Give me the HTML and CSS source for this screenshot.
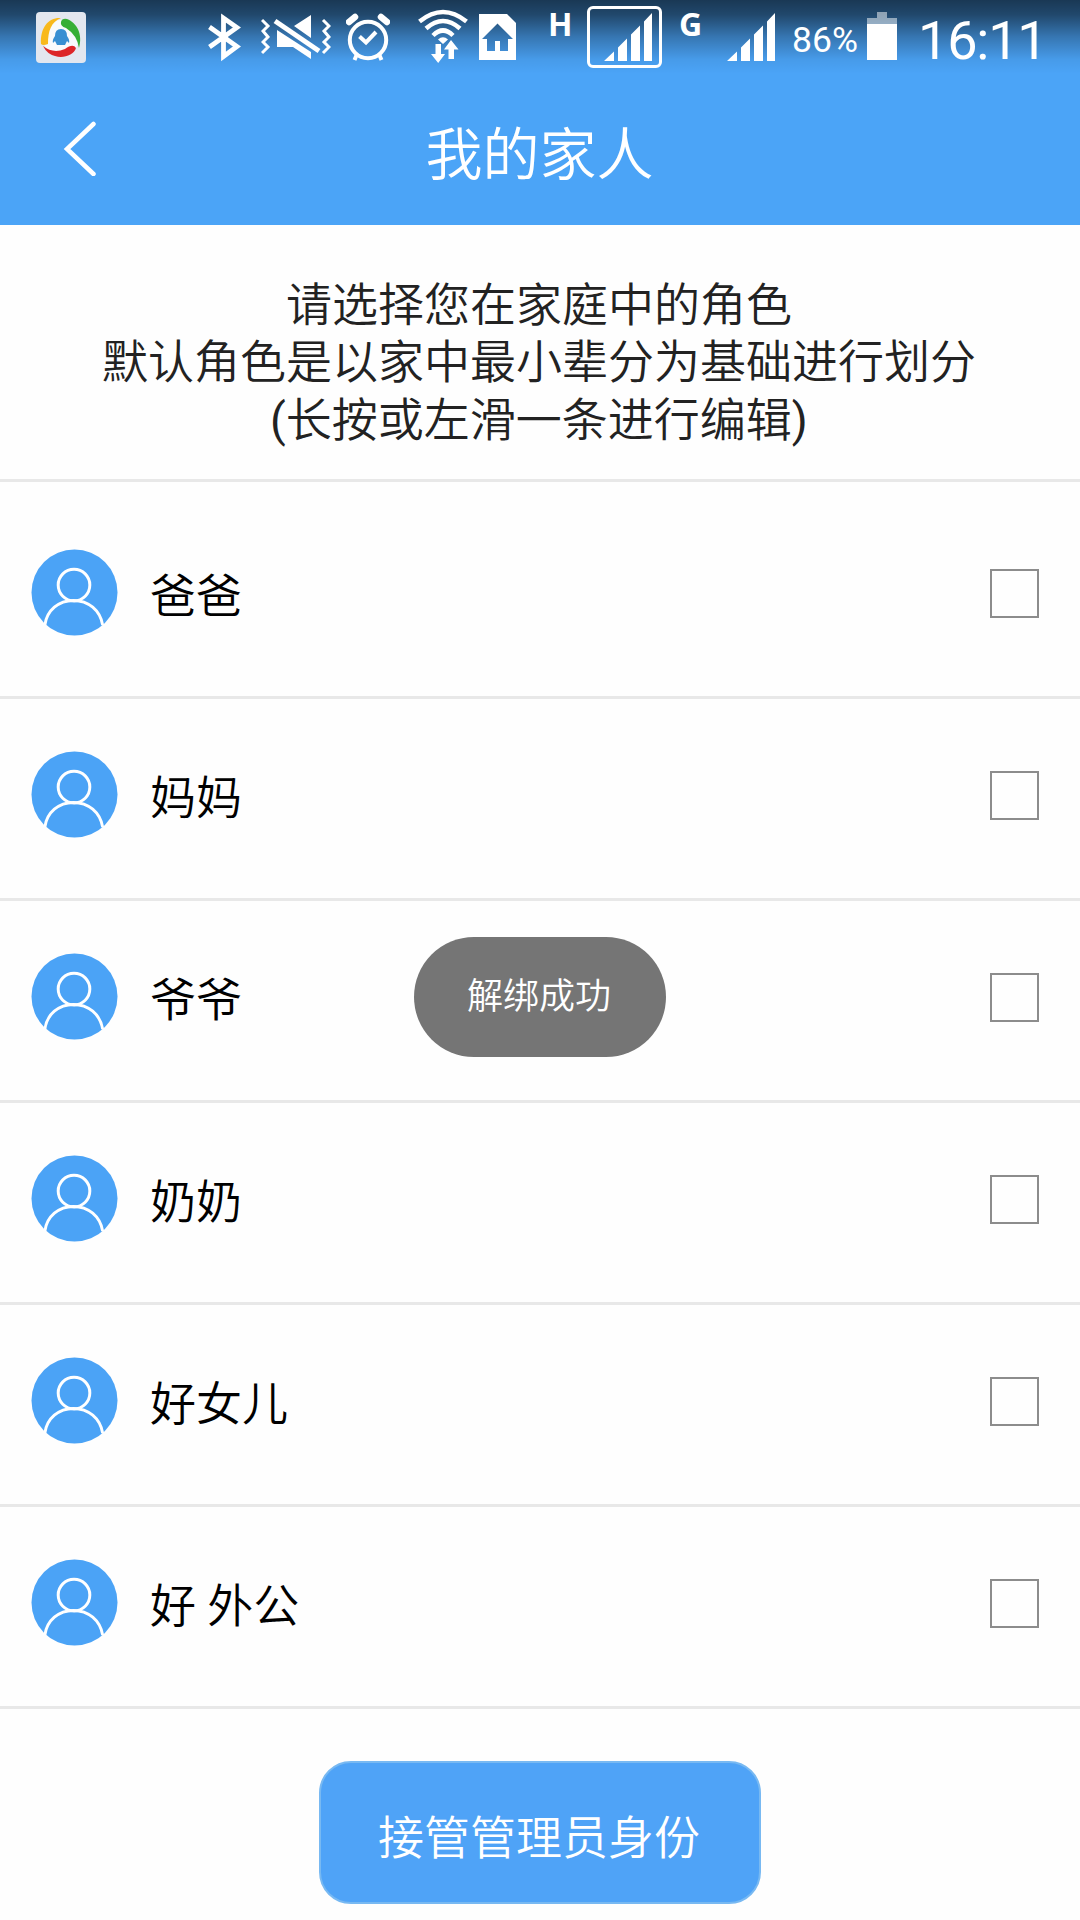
FILE: index.html
```html
<!DOCTYPE html>
<html lang="zh-CN">
<head>
    <meta charset="UTF-8">
    <meta name="viewport" content="width=device-width, initial-scale=1.0">
    <title>我的家人</title>
    <link rel="stylesheet" href="styles.css">
</head>
<body>
    <!-- shared icons -->
    <svg class="sprite" width="0" height="0">
        <symbol id="avatar" viewBox="0 0 88 88">
            <circle cx="44" cy="44" r="43.5" fill="#4ba3f6"/>
            <g fill="none" stroke="#fff" stroke-width="3">
                <circle cx="43.5" cy="36.500" r="16"/>
                <path d="M14 77C16 62 28 52 43 52S70 62 72.500 77"/>
            </g>
        </symbol>
        <symbol id="bars" viewBox="0 0 49 49">
            <path d="M0 48L10 38.500V48zM14 34.500L23 25.500V48H14zM27 21.500L36 12.500V48H27zM40 8.500L48 0V48H40z" fill="#fff"/>
        </symbol>
    </svg>

    <header class="header">
        <div class="status-bar">
            <svg class="app-icon" width="50" height="74" viewBox="36 0 50 74">
                <rect x="36" y="12" width="50" height="51" rx="4" fill="#e3e7ef"/>
                <circle cx="61" cy="38" r="18" fill="#f8fafc"/>
                <path d="M61 18C49 17 40 27 41 44Q43 46 48 44C48 31 51 22 61 18z" fill="#f8b91c"/>
                <path d="M61 22Q62 18 67 19C77 23 83 34 79 48Q77 35 66 28Q60 26 61 22z" fill="#36af35"/>
                <path d="M43 46Q53 54 65 49Q73 43 76 48C74 55 63 59 55 56Q47 54 43 46z" fill="#dd2628"/>
                <path d="M61 29Q67 29 67 36Q70 40 69 43L67 41L65 45H57L55 41L53 43Q52 40 55 36Q55 29 61 29z" fill="#378fd2"/>
            </svg>
            <svg class="bluetooth" width="33" height="74" viewBox="208 0 33 74">
                <path d="M209.500 27L237 46.500L223.500 56.500V18L237 27.500L209.500 47" fill="none" stroke="#fff" stroke-width="4.800"/>
            </svg>
            <svg class="mute" width="70" height="74" viewBox="261 0 70 74">
                <path d="M262 20L268 26L263 31L268 37L263 42L268 47L262 53M323 20L329 26L324 31L329 37L324 42L329 47L323 53" fill="none" stroke="#fff" stroke-width="3"/>
                <path d="M277 30L311 52V59L293 47H277zM294 26L311 15V38z" fill="#fff"/>
                <path d="M275 21L319 51" stroke="#fff" stroke-width="5"/>
            </svg>
            <svg class="alarm" width="44" height="74" viewBox="346 0 44 74">
                <g fill="none" stroke="#fff">
                    <circle cx="368" cy="40" r="18.200" stroke-width="4"/>
                    <path d="M359.500 36.500L366 42.500L376 32" stroke-width="4"/>
                    <path d="M349 22L355 17M387 22L381 17" stroke-width="6.500" stroke-linecap="round"/>
                    <path d="M357 54L354.500 60M379 54L381.500 60" stroke-width="4"/>
                </g>
            </svg>
            <svg class="wifi" width="50" height="74" viewBox="418 0 50 74">
                <g fill="none" stroke="#fff" stroke-width="4.500">
                    <path d="M419.500 21.500Q443 2.500 466.500 21.500"/>
                    <path d="M426 28.500Q443 13.500 460 28.500"/>
                    <path d="M433 35.500Q443 25.500 453 35.500"/>
                </g>
                <path d="M438 39.500Q443 35 448 39.500L443 44z" fill="#fff"/>
                <path d="M435.500 44H441V54H445L438.200 63L431 54H435.500zM451 40L458.500 49.500H454V59H448.500V49.500H444z" fill="#fff"/>
            </svg>
            <svg class="home" width="37" height="74" viewBox="479 0 37 74">
                <path fill-rule="evenodd" d="M479 14H507L516 23V60H479zM497.500 23.500L482 39H487V51H495V41H500V51H508V39H513z" fill="#fff"/>
            </svg>
            <span class="network network-h">H</span>
            <div class="sim-box"><svg width="49" height="49"><use href="#bars"/></svg></div>
            <span class="network network-g">G</span>
            <svg class="signal" width="49" height="49"><use href="#bars"/></svg>
            <span class="percent">86%</span>
            <svg class="battery" width="30" height="74" viewBox="867 0 30 74">
                <path d="M877 12H887V18H897V24H867V18H877z" fill="#fff" opacity="0.5"/>
                <rect x="867" y="24" width="30" height="36" fill="#fff"/>
            </svg>
            <span class="clock">16:11</span>
        </div>
        <div class="nav">
            <svg class="back" width="34" height="56" viewBox="0 0 34 56">
                <path d="M30.500 4L4 29L30.500 54" fill="none" stroke="#fff" stroke-width="4.500" stroke-linecap="round"/>
            </svg>
            <h1 class="title">我的家人</h1>
        </div>
    </header>

    <main>
        <p class="intro">请选择您在家庭中的角色<br>默认角色是以家中最小辈分为基础进行划分<br><span class="paren">(</span>长按或左滑一条进行编辑<span class="paren">)</span></p>

        <ul class="family">
            <li class="member"><svg class="avatar"><use href="#avatar"/></svg><span class="name">爸爸</span><span class="check"></span></li>
            <li class="member"><svg class="avatar"><use href="#avatar"/></svg><span class="name">妈妈</span><span class="check"></span></li>
            <li class="member"><svg class="avatar"><use href="#avatar"/></svg><span class="name">爷爷</span><span class="check"></span></li>
            <li class="member"><svg class="avatar"><use href="#avatar"/></svg><span class="name">奶奶</span><span class="check"></span></li>
            <li class="member"><svg class="avatar"><use href="#avatar"/></svg><span class="name">好女儿</span><span class="check"></span></li>
            <li class="member"><svg class="avatar"><use href="#avatar"/></svg><span class="name">好 外公</span><span class="check"></span></li>
        </ul>

        <button class="takeover" type="button">接管管理员身份</button>
    </main>

    <div class="toast">解绑成功</div>
</body>
</html>
```

FILE: styles.css
```css
* {
    box-sizing: border-box;
}
body {
    margin: 0;
    height: 1920px;
    overflow: hidden;
    background-color: #fefefe;
    color: #000;
    font-family: Roboto, "Noto Sans CJK SC", sans-serif;
    font-weight: 350;
}
.sprite {
    position: absolute;
}
.header {
    height: 225px;
    background-color: #4ba4f7;
    color: #fff;
}

/* status bar */
.status-bar {
    display: flex;
    align-items: flex-start;
    height: 74px;
    padding-left: 36px;
    background: linear-gradient(rgba(0, 0, 0, 0.66), rgba(0, 0, 0, 0.56) 20%, rgba(0, 0, 0, 0.28) 50%, rgba(0, 0, 0, 0.06) 80%, transparent);
}
.status-bar > * {
    flex-shrink: 0;
}
.bluetooth {
    margin-left: 122px;
}
.mute {
    margin-left: 20px;
}
.alarm {
    margin-left: 15px;
}
.wifi {
    margin-left: 28px;
}
.home {
    margin-left: 11px;
}
.network {
    width: 24px;
    padding-top: 8px;
    font-family: "Open Sans", sans-serif;
    font-size: 32px;
    font-weight: bold;
    line-height: 32px;
}
.network-h {
    margin-left: 32px;
}
.network-g {
    margin-left: 17px;
}
.sim-box {
    width: 75px;
    height: 62px;
    margin: 6px 0 0 15px;
    padding: 4px 0 0 14px;
    border: 3px solid #fff;
    border-radius: 6px;
}
.signal {
    margin: 13px 0 0 24px;
}
.percent {
    width: 69px;
    margin-left: 16px;
    padding-top: 22px;
    font-size: 35.5px;
    font-weight: 400;
    line-height: 36px;
}
.battery {
    margin-left: 6px;
}
.clock {
    margin-left: 21px;
    padding-top: 13px;
    font-size: 54px;
    font-weight: 400;
    letter-spacing: -1.2px;
    line-height: 55px;
}

/* title row */
.nav {
    display: flex;
    align-items: center;
    height: 151px;
    padding: 0 63px;
}
.back {
    margin-bottom: 4px;
}
.title {
    flex: 1;
    margin: 0 35px 0 0;
    padding-top: 13px;
    font-size: 57px;
    font-weight: 350;
    line-height: 80px;
    text-align: center;
}

.intro {
    height: 257px;
    margin: 0;
    padding: 52px 2px 0 0;
    border-bottom: 3px solid #e8e8e8;
    color: #222;
    font-size: 46px;
    line-height: 57.3px;
    text-align: center;
}
.paren {
    font-weight: 400;
}
.family {
    margin: 0;
    padding: 15px 0 0;
    list-style: none;
}
.member {
    display: flex;
    align-items: center;
    height: 202px;
    padding: 0 41px 7px 31px;
    border-bottom: 3px solid #e8e8e8;
}
.avatar {
    width: 87px;
    height: 87px;
    margin-bottom: 2px;
}
.name {
    flex: 1;
    margin-left: 32px;
    padding-top: 5px;
    font-size: 46px;
    line-height: 60px;
}
.check {
    width: 49px;
    height: 49px;
    border: 2px solid #8c8c8c;
}
.takeover {
    display: block;
    width: 442px;
    height: 143px;
    margin: 52px 0 0 319px;
    padding: 2px 2px 0 0;
    border: 2px solid #78b9f2;
    border-radius: 32px;
    background-color: #4fa3f7;
    color: #fff;
    font-family: inherit;
    font-size: 46px;
    font-weight: 350;
}

/* message shown over the list */
.toast {
    position: absolute;
    top: 937px;
    left: 414px;
    width: 252px;
    height: 120px;
    padding-right: 2px;
    border-radius: 60px;
    background-color: #757575;
    color: #fff;
    font-size: 36px;
    line-height: 120px;
    text-align: center;
}
```
